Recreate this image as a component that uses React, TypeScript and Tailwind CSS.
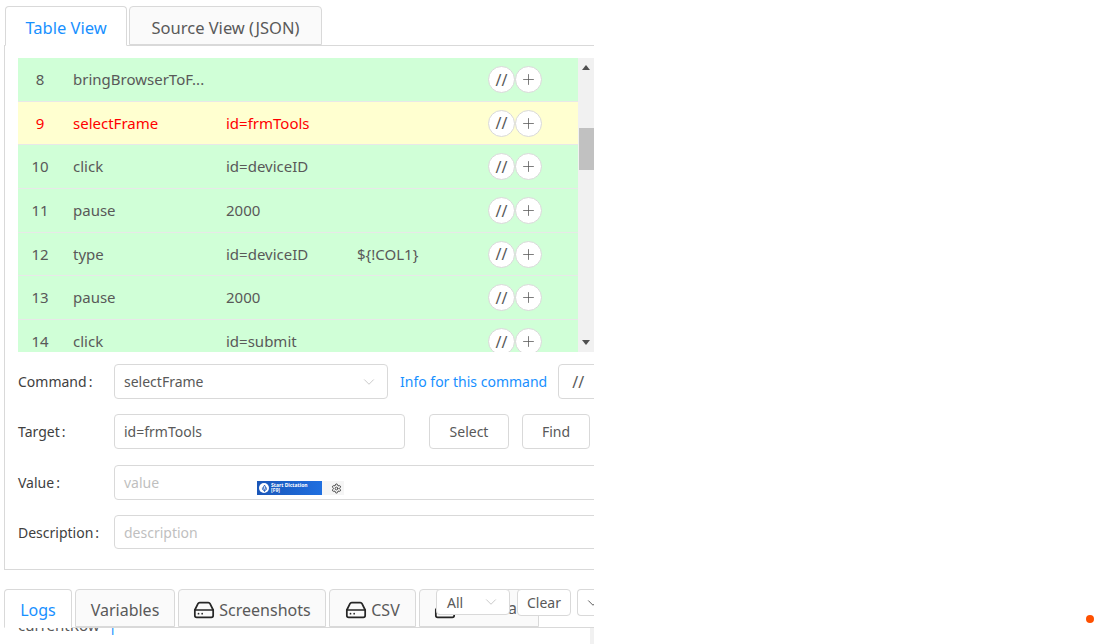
import React from 'react';
import { ChevronDown, HardDrive, Settings, Mic, Plus } from 'lucide-react';

const rows = [
  { n: 8, cmd: 'bringBrowserToF...', target: '', value: '', h: 'h-[44px]' },
  { n: 9, cmd: 'selectFrame', target: 'id=frmTools', value: '', h: 'h-[43px]', active: true },
  { n: 10, cmd: 'click', target: 'id=deviceID', value: '', h: 'h-[44px]' },
  { n: 11, cmd: 'pause', target: '2000', value: '', h: 'h-[44px]' },
  { n: 12, cmd: 'type', target: 'id=deviceID', value: '${!COL1}', h: 'h-[43px]' },
  { n: 13, cmd: 'pause', target: '2000', value: '', h: 'h-[44px]' },
  { n: 14, cmd: 'click', target: 'id=submit', value: '', h: 'h-[44px]' },
];

function Row({ row }: { row: (typeof rows)[number] }) {
  return (
    <div
      className={`flex items-center shrink-0 border-b border-[#e8e8e8] text-[15px] ${row.h} ${
        row.active ? 'bg-[#ffffd0] text-[#ff0000]' : 'bg-[#d0ffd7] text-[#595959]'
      }`}
    >
      <div className="w-[44px] text-center">{row.n}</div>
      <div className="w-[152px] pl-[11px] whitespace-nowrap">{row.cmd}</div>
      <div className="w-[132px] pl-[12px] whitespace-nowrap">{row.target}</div>
      <div className="w-[142px] pl-[11px] whitespace-nowrap">{row.value}</div>
      <div className="flex">
        <div className="w-[27px] h-[27px] rounded-full bg-white border border-[#d9d9d9] flex items-center justify-center text-[#595959] text-[16px]">
          //
        </div>
        <div className="w-[27px] h-[27px] rounded-full bg-white border border-[#d9d9d9] flex items-center justify-center text-[#595959]">
          <Plus size={17} strokeWidth={1.1} />
        </div>
      </div>
    </div>
  );
}

function Field({ label, children, className }: { label: string; children: React.ReactNode; className: string }) {
  return (
    <div className={`flex items-center ${className}`}>
      <div className="w-[96px] shrink-0 text-[#404040] whitespace-nowrap">
        {label}
        <span className="ml-[2px]">:</span>
      </div>
      {children}
    </div>
  );
}

function Tab({ children, active, className }: { children: React.ReactNode; active?: boolean; className: string }) {
  return (
    <div
      className={`flex items-center shrink-0 gap-[4px] border border-[#d9d9d9] rounded-t-[4px] whitespace-nowrap ${className} ${
        active ? 'bg-white text-[#1890ff] border-b-white' : 'bg-[#fafafa] text-[#595959]'
      }`}
    >
      {children}
    </div>
  );
}

export default function App() {
  return (
    <div className="relative w-[1095px] h-[644px] bg-white overflow-hidden text-[14px] font-['Noto_Sans',sans-serif]">
      <div className="w-[594px] h-[644px] overflow-hidden pt-[6px] pl-[4px]">
        {/* top tabs */}
        <div className="flex w-[600px] h-[40px] gap-[2px] pl-[1px] border-b border-[#d9d9d9] text-[16.5px]">
          <Tab active className="w-[122px] h-[40px] justify-center pt-[4px]">Table View</Tab>
          <Tab className="w-[193px] h-[39px] justify-center pt-[5px]">Source View (JSON)</Tab>
        </div>

        {/* tab body */}
        <div className="w-[640px] h-[524px] border-l border-b border-[#d9d9d9] pl-[13px] pt-[12px]">
          <div className="flex w-[576px] h-[294px]">
            <div className="flex flex-col w-[560px] h-[294px] overflow-hidden">
              {rows.map((row) => (
                <Row key={row.n} row={row} />
              ))}
            </div>
            <div className="relative w-[16px] h-[294px] bg-[#f1f1f1] flex flex-col items-center justify-between py-[7px]">
              <div className="w-0 h-0 border-x-[4px] border-x-transparent border-b-[5px] border-b-[#505050]" />
              <div className="absolute left-[1px] top-[70px] w-[15px] h-[42px] bg-[#c1c1c1]" />
              <div className="w-0 h-0 border-x-[4px] border-x-transparent border-t-[5px] border-t-[#505050]" />
            </div>
          </div>

          <Field label="Command" className="mt-[12px] h-[35px]">
            <div className="w-[274px] h-[35px] shrink-0 border border-[#d9d9d9] rounded-[4px] flex items-center justify-between pl-[9px] pr-[9px] text-[#595959]">
              selectFrame
              <ChevronDown size={18} strokeWidth={1.1} className="text-[#bfbfbf]" />
            </div>
            <span className="ml-[12px] text-[#1890ff] whitespace-nowrap">Info for this command</span>
            <div className="ml-[11px] w-[50px] h-[35px] shrink-0 border border-[#d9d9d9] rounded-[4px] flex items-center pl-[13px] text-[16px] text-[#595959]">
              //
            </div>
          </Field>

          <Field label="Target" className="mt-[15px] h-[35px]">
            <div className="w-[291px] h-[35px] shrink-0 border border-[#d9d9d9] rounded-[4px] flex items-center px-[9px] text-[#595959]">
              id=frmTools
            </div>
            <div className="ml-[24px] w-[80px] h-[35px] shrink-0 border border-[#d9d9d9] rounded-[4px] flex items-center justify-center text-[#595959]">
              Select
            </div>
            <div className="ml-[13px] w-[68px] h-[35px] shrink-0 border border-[#d9d9d9] rounded-[4px] flex items-center justify-center text-[#595959]">
              Find
            </div>
          </Field>

          <Field label="Value" className="mt-[16px] h-[35px]">
            <div className="w-[500px] h-[35px] shrink-0 border border-[#d9d9d9] rounded-[4px] flex items-center px-[9px] text-[#bfbfbf]">
              value
            </div>
          </Field>

          <Field label="Description" className="mt-[15px] h-[34px]">
            <div className="w-[500px] h-[34px] shrink-0 border border-[#d9d9d9] rounded-[4px] flex items-center px-[9px] text-[#bfbfbf]">
              description
            </div>
          </Field>
        </div>

        {/* bottom tabs */}
        <div className="mt-[19px] flex w-[600px] h-[39px] gap-[3px] border-b border-[#d9d9d9] text-[16px]">
          <Tab active className="w-[68px] h-[39px] justify-center pt-[2px]">Logs</Tab>
          <Tab className="w-[100px] h-[38px] justify-center pt-[3px]">Variables</Tab>
          <Tab className="w-[148px] h-[38px] justify-center pt-[3px]">
            <HardDrive size={22} strokeWidth={1.9} className="text-[#262626]" />
            Screenshots
          </Tab>
          <Tab className="w-[87px] h-[38px] justify-center pt-[3px]">
            <HardDrive size={22} strokeWidth={1.9} className="text-[#262626]" />
            CSV
          </Tab>
          <Tab className="w-[120px] h-[38px] justify-between pl-[14px] pr-[21px]">
            <HardDrive size={22} strokeWidth={1.9} className="text-[#262626] mt-[3px]" />
            Data
          </Tab>
        </div>
        <div className="w-[586px] h-[17px] overflow-hidden text-[15px] text-[#595959] pl-[14px]">
          <div className="-mt-[14px] whitespace-nowrap">
            currentRow <span className="ml-[5px] text-[#1890ff]">|</span>
          </div>
        </div>
      </div>

      {/* scrollbar of the log panel */}
      <div className="absolute left-[590px] top-[628px] w-[4px] h-[16px] bg-[#f1f1f1]" />

      {/* floating log controls */}
      <div className="absolute left-[436px] top-[589px] w-[74px] h-[26px] bg-white border border-[#d9d9d9] rounded-[4px] flex items-center justify-between pl-[10px] pr-[9px] text-[#595959]">
        All
        <ChevronDown size={18} strokeWidth={1.1} className="text-[#bfbfbf]" />
      </div>
      <div className="absolute left-[517px] top-[589px] w-[54px] h-[27px] bg-white border border-[#d9d9d9] rounded-[4px] flex items-center justify-center text-[#595959]">
        Clear
      </div>
      <div className="absolute left-[577px] top-[589px] w-[17px] h-[27px] overflow-hidden bg-white border border-r-0 border-[#d9d9d9] rounded-l-[4px] flex items-center pl-[6px] text-[#595959]">
        <ChevronDown size={18} strokeWidth={1.3} className="shrink-0" />
      </div>

      {/* dictation widget laid over the value input */}
      <div className="absolute left-[257px] top-[481px] flex h-[14px]">
        <div className="w-[65px] h-[14px] bg-gradient-to-r from-[#1a56b8] to-[#1f6fe0] flex items-center gap-[2px] pl-[2px]">
          <div className="w-[10px] h-[10px] rounded-full bg-white flex items-center justify-center">
            <Mic size={7} strokeWidth={3} className="text-[#1a56b8]" />
          </div>
          <div className="text-white text-[5px] leading-[5px] font-bold">
            Start Dictation
            <br />
            [F9]
          </div>
        </div>
        <div className="w-[22px] h-[14px] bg-[#f5f5f5] flex items-center justify-end pr-[2px]">
          <Settings size={11} className="text-[#404040]" />
        </div>
      </div>

      {/* orange status dot */}
      <div className="absolute left-[1086px] top-[615px] w-[8px] h-[8px] rounded-full bg-[#fe5000]" />
    </div>
  );
}
